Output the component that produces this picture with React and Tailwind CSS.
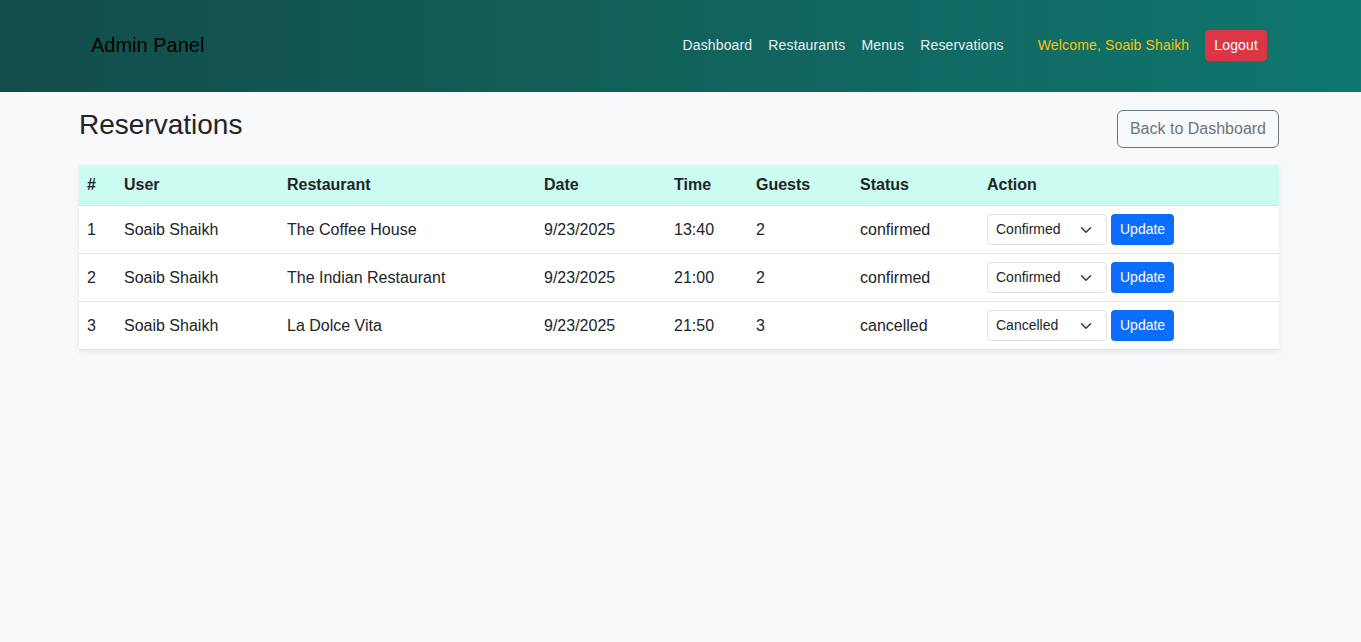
const reservations = [
  { id: 1, user: 'Soaib Shaikh', restaurant: 'The Coffee House', date: '9/23/2025', time: '13:40', guests: 2, status: 'confirmed' },
  { id: 2, user: 'Soaib Shaikh', restaurant: 'The Indian Restaurant', date: '9/23/2025', time: '21:00', guests: 2, status: 'confirmed' },
  { id: 3, user: 'Soaib Shaikh', restaurant: 'La Dolce Vita', date: '9/23/2025', time: '21:50', guests: 3, status: 'cancelled' },
];

const columns = [
  { label: '#', w: 'w-[37px]' },
  { label: 'User', w: 'w-[163px]' },
  { label: 'Restaurant', w: 'w-[257px]' },
  { label: 'Date', w: 'w-[130px]' },
  { label: 'Time', w: 'w-[82px]' },
  { label: 'Guests', w: 'w-[104px]' },
  { label: 'Status', w: 'w-[127px]' },
  { label: 'Action', w: 'w-[300px]' },
];

function StatusSelect({ value }) {
  return (
    <div className="relative w-[120px]">
      <select
        defaultValue={value}
        className="w-full h-[31px] appearance-none bg-white border border-[#dee2e6] rounded-[4px] pl-[8px] pr-9 text-[14px] leading-[1.5] text-[#212529] outline-none"
      >
        <option value="pending">Pending</option>
        <option value="confirmed">Confirmed</option>
        <option value="cancelled">Cancelled</option>
      </select>
      <svg
        className="absolute right-[15px] top-[10px] pointer-events-none"
        width="12"
        height="12"
        viewBox="0 0 16 16"
        fill="none"
        stroke="#343a40"
        strokeWidth="2"
        strokeLinecap="round"
        strokeLinejoin="round"
      >
        <path d="M2 5l6 6 6-6" />
      </svg>
    </div>
  );
}

export default function App() {
  const cell = 'px-2 pt-[9px] pb-[7px]';

  return (
    <div className="min-h-screen bg-[#f8f9fa] font-['Liberation_Sans',Arial,sans-serif] text-[#212529]">
      <nav className="h-[92px] bg-gradient-to-r from-[#124d4a] to-[#0e776e] pl-[79px] pr-[82px]">
        <div className="h-full px-3 pb-[2px] flex items-center justify-between">
          <span className="text-[20px] text-black">Admin Panel</span>
          <div className="flex items-center text-[14px] tracking-[0.15px]">
            <a className="px-2 text-white/90" href="#">Dashboard</a>
            <a className="px-2 text-white/90" href="#">Restaurants</a>
            <a className="px-2 text-white/90" href="#">Menus</a>
            <a className="px-2 text-white/90" href="#">Reservations</a>
            <span className="ml-[26px] text-[#ffc107]">Welcome, Soaib Shaikh</span>
            <button className="ml-4 bg-[#dc3545] text-white border border-[#dc3545] rounded-[4px] px-2 py-1 leading-[1.5]">
              Logout
            </button>
          </div>
        </div>
      </nav>

      <main className="pl-[79px] pr-[82px]">
        <div className="mt-4 mb-4 flex items-center justify-between">
          <h2 className="text-[28px] leading-[1.2] mb-2">Reservations</h2>
          <button className="border border-[#6c757d] text-[#6c757d] rounded-[6px] px-3 py-[6px] text-[16px] leading-[1.5]">
            Back to Dashboard
          </button>
        </div>

        <table className="w-full table-fixed bg-white shadow-[0_2px_6px_rgba(0,0,0,0.07)] text-[16px] -mt-px">
          <thead>
            <tr className="bg-[#ccfbf1] border-b border-[#dee2e6]">
              {columns.map(c => (
                <th key={c.label} className={`${c.w} text-left font-bold px-2 py-2 h-[40px] leading-[1.5]`}>
                  {c.label}
                </th>
              ))}
            </tr>
          </thead>
          <tbody>
            {reservations.map(r => (
              <tr key={r.id} className="border-b border-[#dee2e6]">
                <td className={`${cell} h-[48px]`}>{r.id}</td>
                <td className={cell}>{r.user}</td>
                <td className={cell}>{r.restaurant}</td>
                <td className={cell}>{r.date}</td>
                <td className={cell}>{r.time}</td>
                <td className={cell}>{r.guests}</td>
                <td className={cell}>{r.status}</td>
                <td className="px-2 py-2">
                  <div className="flex items-center gap-1">
                    <StatusSelect value={r.status} />
                    <button className="h-[31px] bg-[#0d6efd] text-white text-[14px] rounded-[4px] px-[9px] leading-[1.5]">
                      Update
                    </button>
                  </div>
                </td>
              </tr>
            ))}
          </tbody>
        </table>
      </main>
    </div>
  );
}
